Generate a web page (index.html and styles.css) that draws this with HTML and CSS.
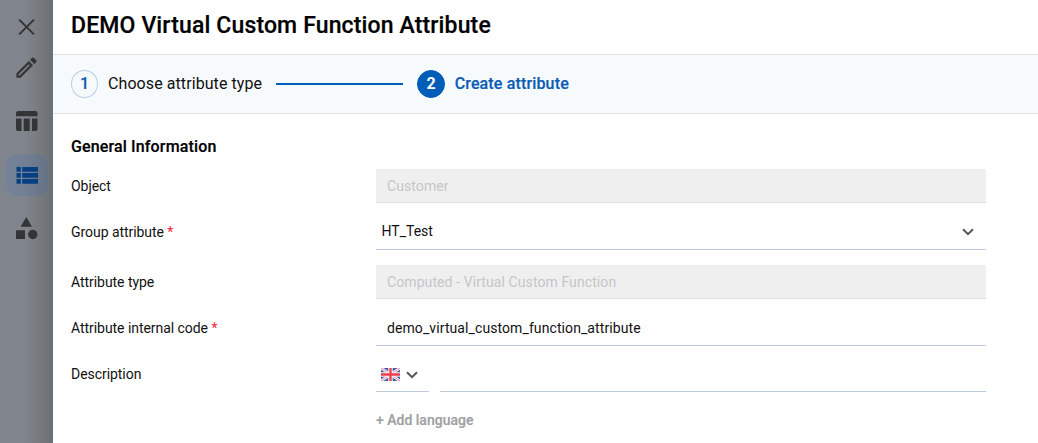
FILE: index.html
```html
<!DOCTYPE html>
<html lang="en">
<head>
<meta charset="utf-8">
<title>DEMO Virtual Custom Function Attribute</title>
<link rel="stylesheet" href="styles.css">
</head>
<body>
<div class="app">
  <nav class="rail">
    <a class="rail-item"><svg width="24" height="24" viewBox="0 0 24 24"><path d="M4.2 4.600 19 19.400M19 4.600 4.200 19.400" fill="none" stroke="currentColor" stroke-width="2"/></svg></a>
    <a class="rail-item rail-edit"><svg width="27" height="27" viewBox="0 0 24 24"><path fill="currentColor" d="M14.060 9.020l.92.92L5.920 19H5v-.92l9.060-9.060M17.660 3c-.25 0-.51.1-.7.290l-1.830 1.830 3.750 3.750 1.830-1.830c.39-.39.39-1.020 0-1.410l-2.340-2.340c-.2-.2-.45-.29-.71-.29zm-3.600 3.190L3 17.250V21h3.750L17.810 9.940l-3.750-3.750z"/></svg></a>
    <a class="rail-item rail-table"><svg width="22" height="20" viewBox="0 0 22 20"><path fill="currentColor" d="M2 0h17.500a2 2 0 0 1 2 2v3.300H0V2a2 2 0 0 1 2-2zM0 7.500h5.500V20H2a2 2 0 0 1-2-2zM7.700 7.500h6V20h-6zM16 7.500h5.500V18a2 2 0 0 1-2 2H16z"/></svg></a>
    <a class="rail-item rail-active"><svg width="22" height="17" viewBox="0 0 22 17"><path fill="currentColor" d="M.5 0h4.300v4.700H.5zM6.200 0H22v4.700H6.200zM.5 6h4.300v4.700H.5zM6.200 6H22v4.700H6.200zM.5 12h4.300v4.700H.5zM6.200 12H22v4.700H6.200z"/></svg></a>
    <a class="rail-item rail-shapes"><svg width="22" height="23" viewBox="0 0 22 23"><path fill="currentColor" d="M10.300 0 16 9.700H4.600zM0 13.300h9V22H0z"/><circle cx="16.800" cy="17.500" r="4.700" fill="currentColor"/></svg></a>
  </nav>
  <main class="panel">
    <header class="panel-head"><h1>DEMO Virtual Custom Function Attribute</h1></header>
    <div class="stepper">
      <span class="step-num">1</span><span class="step-label">Choose attribute type</span>
      <span class="step-line"></span>
      <span class="step-num current">2</span><span class="step-label current-label">Create attribute</span>
    </div>
    <form class="form">
      <h2>General Information</h2>
      <div class="row"><label>Object</label><div class="field disabled">Customer</div></div>
      <div class="row"><label>Group attribute <b class="req">*</b></label>
        <div class="field select"><span>HT_Test</span><svg class="chevron" width="12" height="8" viewBox="0 0 12 8"><path d="m1 1.200 5 5 5-5"/></svg></div></div>
      <div class="row row-type"><label>Attribute type</label><div class="field disabled">Computed - Virtual Custom Function</div></div>
      <div class="row"><label>Attribute internal code <b class="req">*</b></label><div class="field code">demo_virtual_custom_function_attribute</div></div>
      <div class="row"><label>Description</label>
        <div class="localized">
          <div class="field language">
            <svg width="19" height="13" viewBox="0 0 19 13"><path fill="#405aa3" d="M0 0h19v13H0z"/><path d="m0 0 19 13M19 0 0 13" stroke="#f1eef5" stroke-width="2.800"/><path d="m0 0 19 13M19 0 0 13" stroke="#df8794" stroke-width=".9"/><path d="M9.500 0v13M0 6.500h19" stroke="#faeff3" stroke-width="4.500"/><path d="M9.500 0v13M0 6.500h19" stroke="#e83e50" stroke-width="2.300"/></svg>
            <svg class="chevron" width="12" height="8" viewBox="0 0 12 8"><path d="m1 1.200 5 5 5-5"/></svg>
          </div>
          <div class="field"></div>
        </div></div>
      <a class="add">+ Add language</a>
    </form>
  </main>
</div>
</body>
</html>
```
FILE: styles.css
```css
* { box-sizing: border-box; }
body { margin: 0; background: #fff; color: #111; font-family: Roboto, "Liberation Sans", sans-serif; overflow: hidden; }
.app { display: flex; width: 1038px; height: 443px; }
.rail { width: 53px; display: flex; flex-direction: column; align-items: center; padding-top: 15px; color: #333436; background: linear-gradient(90deg, #80848d 0, #80848c 26px, #7c8083 32px, #6b7075 53px); }
.rail-item { display: flex; align-items: center; justify-content: center; width: 42px; height: 24px; flex: none; }
.rail-item svg { display: block; flex: none; }
.rail-edit { margin-top: 16px; }
.rail-table { margin-top: 30px; }
.rail-active { height: 42px; margin-top: 21px; border-radius: 12px; color: #063f82; background: linear-gradient(90deg, #74829a, #727f93 50%, #657184); }
.rail-shapes { margin-top: 20px; }
.panel { flex: 1; min-width: 0; background: #fff; }
.panel-head { height: 55px; padding: 1px 18px 0; border-bottom: 1px solid #e1e3e5; }
h1 { margin: 0; font-size: 23px; line-height: 50px; font-weight: 500; letter-spacing: .14px; color: #000; -webkit-text-stroke: .2px #000; }
.stepper { display: flex; align-items: center; height: 59px; padding: 0 18px; background: #f6fafd; border-bottom: 1px solid #e1e3e5; }
.step-num { width: 27px; height: 28px; border: 1px solid #b9cee6; border-radius: 50%; color: #0b59b5; font-size: 16px; font-weight: 500; line-height: 26px; text-align: center; -webkit-text-stroke: .2px #0b59b5; }
.current { width: 28px; color: #fff; background: #005eb8; border-color: #005eb8; font-weight: 700; -webkit-text-stroke: 0; }
.step-label { margin-left: 10px; font-size: 16px; line-height: 20px; letter-spacing: .08px; }
.current-label { margin-left: 9.5px; color: #0b5cb5; font-weight: 500; letter-spacing: .15px; -webkit-text-stroke: .2px #0b5cb5; }
.step-line { width: 127px; height: 2px; margin: 0 14px; background: #005eb8; }
.form { padding: 23px 52px 0 18px; }
h2 { margin: 0 0 12px; font-size: 16px; line-height: 20px; font-weight: 500; letter-spacing: .14px; color: #000; -webkit-text-stroke: .2px #000; }
.row { display: grid; grid-template-columns: 305px 1fr; height: 34px; margin-bottom: 12px; align-items: center; font-size: 14px; }
.row > label { letter-spacing: -.05px; }
.row-type { margin-top: 16px; }
.req { color: #f3263d; font-weight: 400; }
.field { height: 35px; margin-bottom: -1px; padding: 0 11px; line-height: 34px; border-bottom: 1px solid #bdcadb; }
.disabled { height: 34px; margin-bottom: 0; background: #efefef; color: #c5c6c8; border-color: #e1e1e1; letter-spacing: .09px; }
.code { letter-spacing: .09px; }
.select { display: flex; align-items: center; justify-content: space-between; padding: 0 12px 0 5.5px; }
.select span { line-height: 32px; padding-bottom: 2px; }
.chevron { fill: none; stroke: #555; stroke-width: 2; }
.localized { display: grid; grid-template-columns: 53px 1fr; gap: 11px; }
.language { display: flex; align-items: center; gap: 6px; padding: 1px 5px 0; }
.add { display: block; margin-left: 305px; font-size: 14px; line-height: 34px; font-weight: 500; color: #a0a1a3; -webkit-text-stroke: .2px #a0a1a3; }
```
